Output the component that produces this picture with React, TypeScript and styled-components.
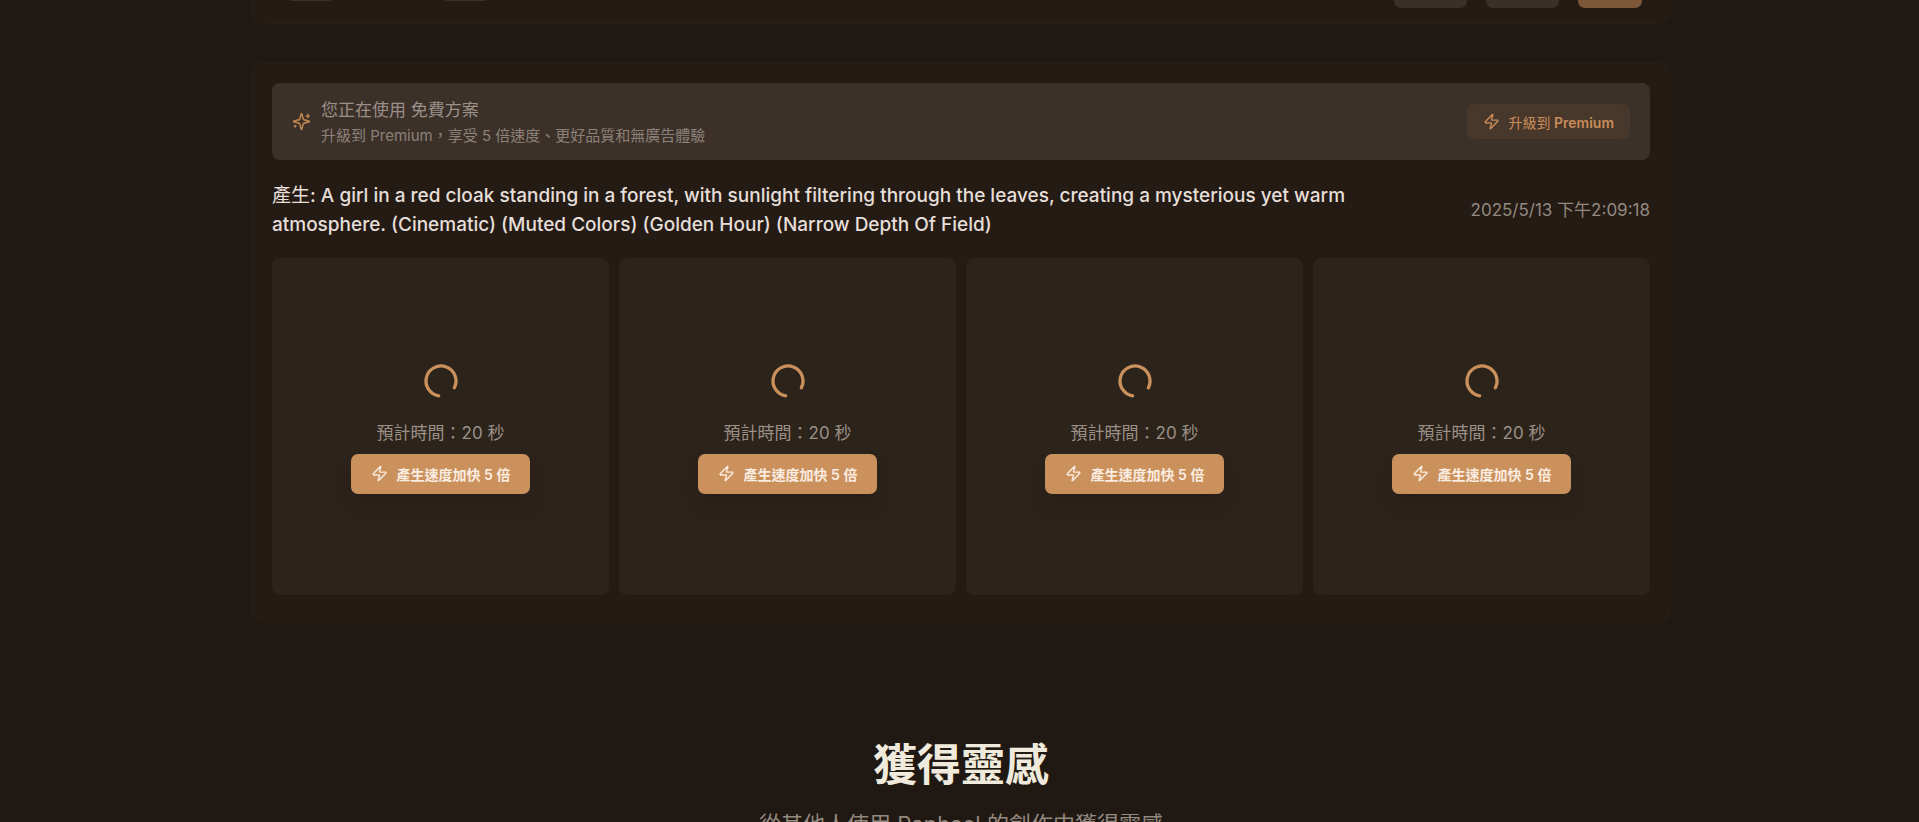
import React from "react";
import styled, { createGlobalStyle } from "styled-components";
import { Zap, LoaderCircle } from "lucide-react";

const GlobalStyle = createGlobalStyle`
  *, *::before, *::after { box-sizing: border-box; }
  body {
    margin: 0;
    background: #201813;
    color: #e6ded8;
    font-family: Inter, "Noto Sans CJK TC", sans-serif;
    font-size: 17px;
    line-height: 24px;
  }
  button { font-family: inherit; cursor: pointer; }
  h1, h2, p { margin: 0; }
`;

const Page = styled.main`
  display: flex;
  flex-direction: column;
  align-items: center;
  height: 100vh;
  padding-left: 3px;
  overflow: hidden;
`;

const Panel = styled.section`
  flex: none;
  width: 100%;
  max-width: 1420px;
  border: 1px solid #271f18;
  border-radius: 14px;
  background: #241b15;
`;

const Composer = styled(Panel)`
  display: flex;
  justify-content: space-between;
  border-top: 0;
  border-radius: 0 0 14px 14px;
  padding: 0 28px 15px;
`;

const ToolGroup = styled.div<{ $gap: number; $inset?: boolean }>`
  display: flex;
  align-items: flex-start;
  gap: ${(p) => p.$gap}px;
  padding-left: ${(p) => (p.$inset ? 10 : 0)}px;
`;

const ToolEdge = styled.button<{ $width: number; $height: number; $accent?: boolean }>`
  width: ${(p) => p.$width}px;
  height: ${(p) => p.$height}px;
  padding: 0;
  border: 0;
  border-radius: 0 0 7px 7px;
  background: ${(p) => (p.$accent ? "#7c5838" : "#3a302a")};
`;

const Results = styled(Panel)`
  margin-top: 38px;
  padding: 20px 20px 27px;
`;

const Banner = styled.div`
  display: flex;
  align-items: center;
  gap: 10px;
  min-height: 77px;
  padding: 14px 20px;
  border-radius: 8px;
  background: #3c3129;
  color: #9b9089;
`;

const SparklesIcon = styled.svg`
  width: 19px;
  height: 19px;
  fill: none;
  stroke: #b98150;
  stroke-width: 2;
  stroke-linecap: round;
  stroke-linejoin: round;
`;

const BannerText = styled.div`
  flex: 1;
  display: flex;
  flex-direction: column;
  gap: 4px;
`;

const PlanNote = styled.p`
  font-size: 15px;
  line-height: 19px;
  color: #8c817a;
`;

const Light = styled.span`
  font-weight: 400;
`;

const UpgradeButton = styled.button`
  display: flex;
  align-items: center;
  gap: 8px;
  height: 35px;
  padding: 0 16px;
  border: 0;
  border-radius: 7px;
  background: #48372b;
  color: #c88d59;
  font-size: 14px;
  font-weight: 600;
`;

const ResultHead = styled.header`
  display: flex;
  align-items: center;
  justify-content: space-between;
  margin: 21px 0 19px;
`;

const Prompt = styled.h2`
  max-width: 80%;
  font-size: 19px;
  font-weight: 500;
  line-height: 29px;
`;

const Time = styled.time`
  color: #93897f;
`;

const Cards = styled.div`
  display: grid;
  grid-template-columns: repeat(4, 1fr);
  gap: 10px;
`;

const Card = styled.article`
  display: flex;
  flex-direction: column;
  align-items: center;
  justify-content: center;
  aspect-ratio: 1;
  padding-top: 1px;
  border-radius: 8px;
  background: #2c231b;
  color: #9b9088;
`;

const Spinner = styled(LoaderCircle)`
  margin-bottom: 20px;
  color: #cb915d;
  transform: rotate(99deg);
`;

const SpeedButton = styled.button`
  display: flex;
  align-items: center;
  gap: 9px;
  height: 40px;
  margin-top: 9px;
  padding: 0 20px;
  border: 0;
  border-radius: 7px;
  background: #cb915d;
  color: #faece0;
  font-size: 14px;
  font-weight: 600;
  box-shadow: 0 12px 18px -4px rgba(32, 24, 24, 0.35);
`;

const Inspiration = styled.section`
  flex: none;
  margin-top: 118px;
  text-align: center;
`;

const Heading = styled.h1`
  font-size: 44px;
  font-weight: 700;
  line-height: 48px;
  color: #efeadb;
`;

const Lead = styled.p`
  margin-top: 20px;
  font-size: 22px;
  line-height: 30px;
  color: #93897f;
`;

const jobs = [1, 2, 3, 4];

export default function App() {
  return (
    <>
      <GlobalStyle />
      <Page>
        <Composer>
          <ToolGroup $gap={114} $inset>
            <ToolEdge $width={41} $height={1} aria-label="選項一" />
            <ToolEdge $width={41} $height={1} aria-label="選項二" />
          </ToolGroup>
          <ToolGroup $gap={19}>
            <ToolEdge $width={73} $height={8} aria-label="清除" />
            <ToolEdge $width={73} $height={8} aria-label="隨機" />
            <ToolEdge $width={64} $height={8} $accent aria-label="產生" />
          </ToolGroup>
        </Composer>

        <Results>
          <Banner>
            <SparklesIcon viewBox="0 0 24 24" aria-hidden="true">
              <path d="M9.937 15.5A2 2 0 0 0 8.5 14.063l-6.135-1.582a.5.5 0 0 1 0-.962L8.5 9.936A2 2 0 0 0 9.937 8.5l1.582-6.135a.5.5 0 0 1 .963 0L14.063 8.5A2 2 0 0 0 15.5 9.937l6.135 1.581a.5.5 0 0 1 0 .964L15.5 14.063a2 2 0 0 0-1.437 1.437l-1.582 6.135a.5.5 0 0 1-.963 0z" />
              <path d="M20 3v4M22 5h-4M4 17v2M5 18H3" />
            </SparklesIcon>
            <BannerText>
              <p>您正在使用 免費方案</p>
              <PlanNote>升級到 Premium，享受 5 倍速度、更好品質和無廣告體驗</PlanNote>
            </BannerText>
            <UpgradeButton>
              <Zap size={17} />
              <span>
                <Light>升級到</Light> Premium
              </span>
            </UpgradeButton>
          </Banner>

          <ResultHead>
            <Prompt>
              <Light>產生</Light>: A girl in a red cloak standing in a forest, with sunlight
              filtering through the leaves, creating a mysterious yet warm atmosphere. (Cinematic)
              (Muted Colors) (Golden Hour) (Narrow Depth Of Field)
            </Prompt>
            <Time dateTime="2025-05-13T14:09:18">2025/5/13 下午2:09:18</Time>
          </ResultHead>

          <Cards>
            {jobs.map((id) => (
              <Card key={id}>
                <Spinner size={40} />
                <p>預計時間：20 秒</p>
                <SpeedButton>
                  <Zap size={17} />
                  產生速度加快 5 倍
                </SpeedButton>
              </Card>
            ))}
          </Cards>
        </Results>

        <Inspiration>
          <Heading>獲得靈感</Heading>
          <Lead>從其他人使用 Raphael 的創作中獲得靈感</Lead>
        </Inspiration>
      </Page>
    </>
  );
}
